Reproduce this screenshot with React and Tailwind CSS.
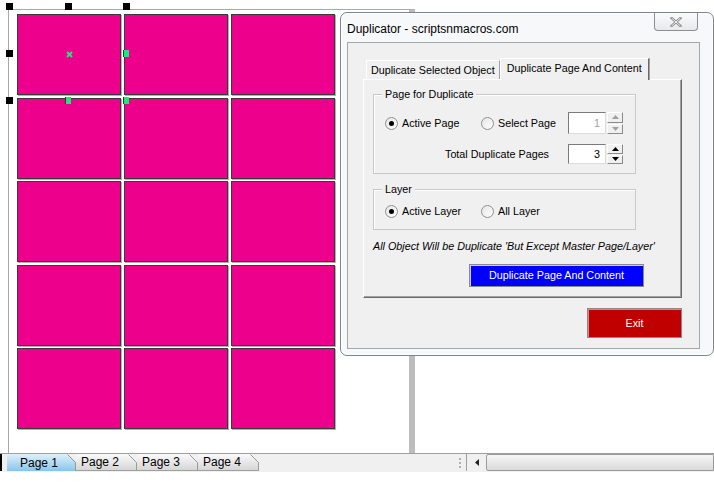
import React from 'react';

const font = { fontFamily: '"Liberation Sans", Arial, sans-serif' };

const Radio = ({ checked }) => (
  <span className="w-[13px] h-[13px] rounded-full border border-[#8e8f8f] bg-gradient-to-br from-[#e6e6e6] to-white flex items-center justify-center shrink-0">
    {checked && <span className="w-[5px] h-[5px] rounded-full bg-black" />}
  </span>
);

const Tri = ({ up, color }) => (
  <svg width="7" height="4" viewBox="0 0 7 4">
    {up ? <path d="M0 4 L3.5 0 L7 4 Z" fill={color} /> : <path d="M0 0 L3.5 4 L7 0 Z" fill={color} />}
  </svg>
);

const Spin = ({ value, disabled }) => (
  <div className="flex items-stretch h-full">
    <div className={`w-[38px] h-full border border-t-[#7a7a7a] border-l-[#7a7a7a] border-b-[#dcdcdc] border-r-[#dcdcdc] bg-white flex items-center justify-end pr-[5px] ${disabled ? 'text-[#a0a0a0]' : 'text-black'}`}>
      {value}
    </div>
    <div className="w-[16px] ml-[1px] flex flex-col gap-[1px]">
      {[true, false].map((up) => (
        <div key={String(up)} className="flex-1 bg-[#f0f0f0] border border-t-white border-l-white border-b-[#8a8a8a] border-r-[#8a8a8a] flex items-center justify-center">
          <Tri up={up} color={disabled ? '#a0a0a0' : '#000'} />
        </div>
      ))}
    </div>
  </div>
);

const GroupBox = ({ title, className, children }) => (
  <div className={`relative border border-[#c8c8c8] shadow-[inset_1px_1px_0_#fff] ${className}`}>
    <span className="absolute -top-[8px] left-[8px] bg-[#f0f0f0] px-[3px] leading-[14px]">{title}</span>
    {children}
  </div>
);

const Handle = ({ x, y }) => (
  <div className="absolute w-[7px] h-[7px] bg-black" style={{ left: x, top: y }} />
);

const Green = ({ x, y }) => (
  <div className="absolute w-[6px] h-[7px] bg-[#1fe87a] border-l border-[#333]" style={{ left: x, top: y }} />
);

const PageTab = ({ label, active }) => (
  <div className={`relative h-[17px] flex items-center ${active ? 'w-[69px]' : 'w-[61px]'}`}>
    <div
      className={`w-full h-full flex items-center ${active ? 'pl-[13px] bg-gradient-to-b from-[#dff0fb] to-[#86c6ec]' : 'pl-[5px] bg-gradient-to-b from-[#fafafa] to-[#d6d6d6] border-b border-[#a0a0a0]'} [clip-path:polygon(0_0,calc(100%-8px)_0,100%_8px,100%_100%,0_100%)]`}
    >
      {label}
    </div>
    <svg className="absolute right-0 top-0" width="9" height="17" viewBox="0 0 9 17">
      <path d="M0.5 0.5 L8.5 8.5 L8.5 17" stroke="#9a9a9a" fill="none" />
    </svg>
  </div>
);

export default function App() {
  const rows = [0, 1, 2, 3, 4];
  const cols = [0, 1, 2];
  return (
    <div className="relative w-[714px] h-[483px] bg-white overflow-hidden text-black" style={font}>
      {/* drawing page */}
      <div className="h-[453px] pl-[8px] pt-[9px]">
        <div className="w-[407px] h-[444px] border-t border-l border-[#a8a8a8] border-r-[6px] border-r-[#bdbdbd] pl-[8px] pt-[4px]">
          <div className="grid grid-cols-[104px_104px_104px] grid-rows-[repeat(5,81px)] gap-x-[3px] gap-y-[2.5px]">
            {rows.map((r) =>
              cols.map((c) => (
                <div key={`${r}-${c}`} className="bg-[#ec008c] border border-[#3a3a3a] shadow-[1px_1px_0_#b0b0b0]" />
              ))
            )}
          </div>
        </div>
      </div>

      {/* selection handles */}
      <Handle x={6} y={3} />
      <Handle x={65} y={3} />
      <Handle x={123} y={3} />
      <Handle x={6} y={50} />
      <Handle x={6} y={97} />
      <Green x={123} y={50} />
      <Green x={65} y={97} />
      <Green x={123} y={97} />
      <svg className="absolute left-[66px] top-[51px]" width="7" height="7" viewBox="0 0 7 7">
        <path d="M1 1 L6 6 M6 1 L1 6" stroke="#1fe87a" strokeWidth="2" />
      </svg>

      {/* bottom bar */}
      <div className="absolute left-0 top-[453px] w-[714px] h-[19px] bg-[#f0f0f0] border-t border-[#a0a0a0] flex items-start text-[12px]">
        <div className="w-[2px] h-[17px] bg-black mr-[5px]" />
        <PageTab label="Page 1" active />
        <PageTab label="Page 2" />
        <PageTab label="Page 3" />
        <PageTab label="Page 4" />
        <div className="flex-1" />
        <div className="w-[5px] h-[17px] flex flex-col justify-center gap-[2px] items-center mr-[4px]">
          <span className="w-[2px] h-[2px] bg-[#b0b0b0]" />
          <span className="w-[2px] h-[2px] bg-[#b0b0b0]" />
          <span className="w-[2px] h-[2px] bg-[#b0b0b0]" />
        </div>
        <div className="w-px h-[17px] bg-[#a0a0a0]" />
        <div className="w-[19px] h-[17px] flex items-center justify-center">
          <svg width="4" height="7" viewBox="0 0 4 7"><path d="M4 0 L0 3.5 L4 7 Z" fill="#222" /></svg>
        </div>
        <div className="w-[228px] h-[17px] border border-[#9a9a9a] rounded-l-[2px] bg-gradient-to-b from-[#f6f6f6] to-[#dadada]" />
      </div>

      {/* dialog window */}
      <div className="absolute left-[340px] top-[12px] w-[374px] h-[344px] rounded-[7px] border border-[#7b8590] bg-[#f7f8fa] shadow-[inset_0_0_0_1px_#fff] text-[10.75px]">
        <div className="h-[29px] flex justify-between items-start pl-[6px]">
          <span className="text-[12px] mt-[7px]">Duplicator - scriptsnmacros.com</span>
          <div className="w-[44px] h-[18px] mr-[15px] border border-t-0 border-[#8a8f96] rounded-b-[4px] bg-gradient-to-b from-[#fbfbfb] to-[#e7e9ec] flex items-center justify-center">
            <svg width="12" height="10" viewBox="0 0 12 10">
              <path d="M1.5 1 L10.5 9 M10.5 1 L1.5 9" stroke="#888" strokeWidth="2.4" strokeLinecap="square" />
              <path d="M1.5 1 L10.5 9 M10.5 1 L1.5 9" stroke="#fff" strokeWidth="0.9" />
            </svg>
          </div>
        </div>

        <div className="ml-[6px] w-[353px] h-[307px] border border-[#a3a7ad] bg-[#f0f0f0] pt-[14px] pl-[15px]">
          {/* tabs */}
          <div className="flex items-end h-[22px] pl-[3px]">
            <div className="h-[19px] px-[4px] flex items-center border border-b-0 border-t-white border-l-white border-r-[#a0a0a0] bg-[#f0f0f0]">
              Duplicate Selected Object
            </div>
            <div className="relative z-10 h-[22px] -mb-[1px] px-[6px] pb-[3px] flex items-center border border-b-0 border-t-white border-l-white border-r-[#6a6a6a] shadow-[1px_0_0_#a0a0a0] bg-[#f0f0f0]">
              Duplicate Page And Content
            </div>
          </div>

          {/* tab panel */}
          <div className="w-[319px] h-[219px] border border-t-white border-l-white border-r-[#6a6a6a] border-b-[#6a6a6a] shadow-[inset_-1px_-1px_0_#a0a0a0] pl-[9px] pt-[14px]">
            <GroupBox title="Page for Duplicate" className="w-[263px] h-[80px] pl-[11px] pt-[17px]">
              <div className="flex items-center h-[22px]">
                <div className="w-[96px] flex items-center gap-[4px]">
                  <Radio checked />
                  <span>Active Page</span>
                </div>
                <div className="w-[87px] flex items-center gap-[4px]">
                  <Radio />
                  <span>Select Page</span>
                </div>
                <Spin value="1" disabled />
              </div>
              <div className="flex items-center h-[20px] mt-[10px]">
                <span className="w-[183px] text-right pr-[19px]">Total Duplicate Pages</span>
                <Spin value="3" />
              </div>
            </GroupBox>

            <GroupBox title="Layer" className="w-[263px] h-[41px] mt-[15px] pl-[11px] pt-[13px]">
              <div className="flex items-center">
                <div className="w-[96px] flex items-center gap-[4px]">
                  <Radio checked />
                  <span>Active Layer</span>
                </div>
                <div className="flex items-center gap-[4px]">
                  <Radio />
                  <span>All Layer</span>
                </div>
              </div>
            </GroupBox>

            <div className="italic mt-[10px] leading-[13px]">
              All Object Will be Duplicate 'But Except Master Page/Layer'
            </div>

            <button className="block ml-[96px] mt-[11px] w-[175px] h-[23px] bg-[#0000ff] text-white border border-[#8a8a8a] shadow-[inset_1px_1px_0_#c8c8ff]">
              Duplicate Page And Content
            </button>
          </div>

          <div className="w-[319px] flex justify-end mt-[10px]">
            <button className="w-[95px] h-[30px] bg-[#c00000] text-white border border-[#8a8a8a] shadow-[inset_1px_1px_0_#e08080]">
              Exit
            </button>
          </div>
        </div>
      </div>
    </div>
  );
}
